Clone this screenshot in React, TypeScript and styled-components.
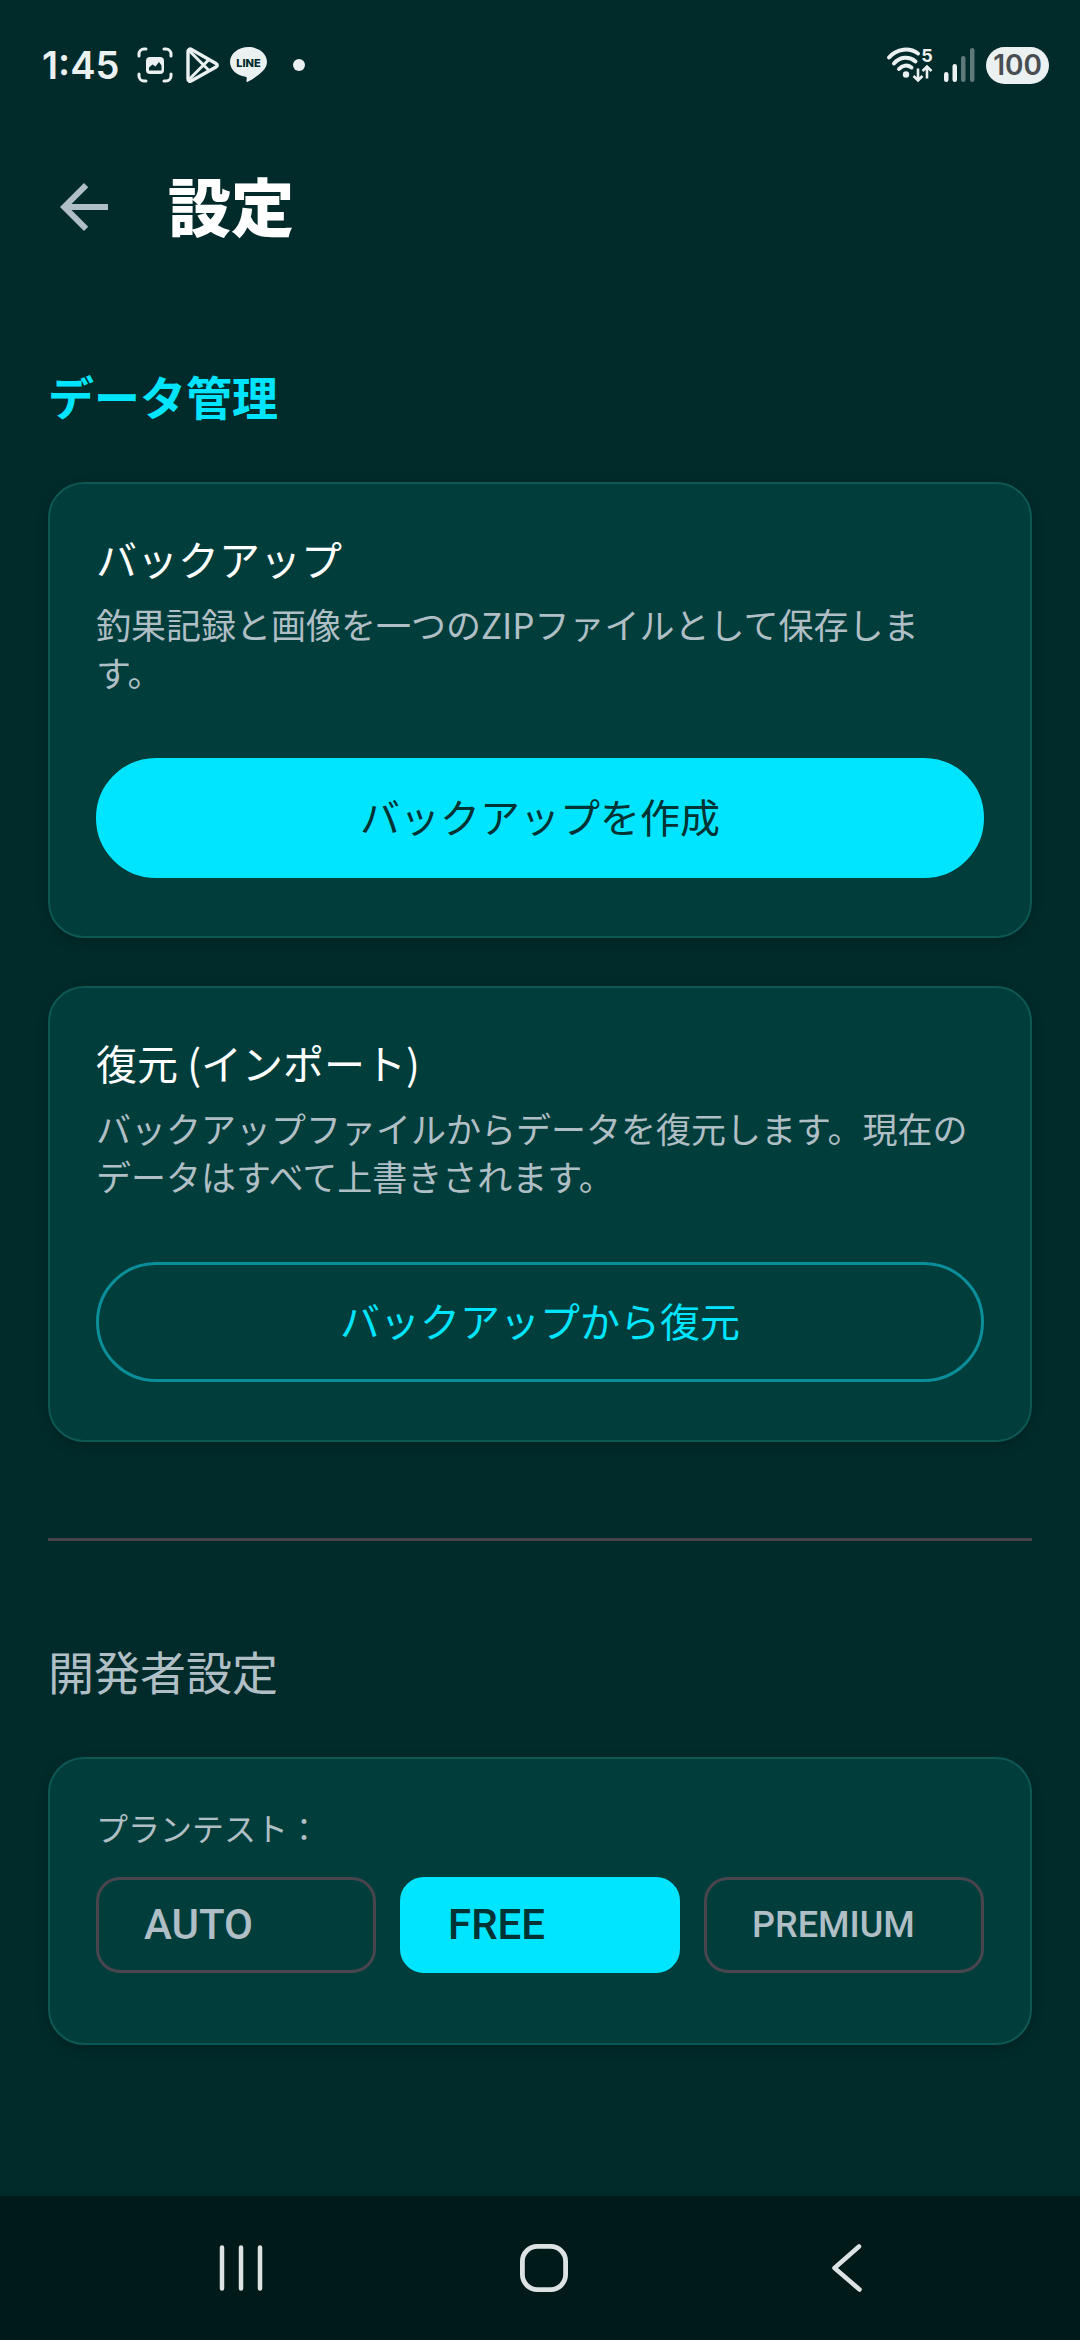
import React, { useState } from "react";
import styled, { createGlobalStyle } from "styled-components";

const color = {
  page: "#002b2a",
  card: "#003d3b",
  cardEdge: "#0e5854",
  nav: "#001a19",
  accent: "#00e5ff",
  onAccent: "#003333",
  muted: "#b0bec5",
  outline: "#49454f",
  status: "#ebf0f1",
};

const GlobalStyle = createGlobalStyle`
  *, *::before, *::after { box-sizing: border-box; }
  body {
    margin: 0;
    background: ${color.page};
    font-family: "Noto Sans CJK JP", sans-serif;
  }
  button { font: inherit; cursor: pointer; }
  svg { display: block; }
`;

const Screen = styled.div`
  display: flex;
  flex-direction: column;
  min-height: 100vh;
  color: #fff;
`;

const StatusBar = styled.div`
  display: flex;
  align-items: center;
  justify-content: space-between;
  height: 130px;
  padding: 0 31px 0 42px;
  color: ${color.status};
  font-family: Inter, sans-serif;
`;

const StatusGroup = styled.div<{ $gap: number }>`
  display: flex;
  align-items: center;
  gap: ${(p) => p.$gap}px;
`;

const Clock = styled.time`
  margin-right: 8px;
  font-size: 38px;
  font-weight: 600;
  line-height: 48px;
`;

const MoreDot = styled.span`
  width: 12px;
  height: 12px;
  margin-left: 16px;
  border-radius: 50%;
  background: ${color.status};
`;

const Battery = styled.span`
  height: 37px;
  padding: 0 7px;
  border-radius: 19px;
  background: ${color.status};
  color: #484d52;
  font-size: 28px;
  font-weight: 600;
  line-height: 37px;
`;

const Header = styled.header`
  display: flex;
  align-items: center;
  gap: 48px;
  height: 154px;
  padding: 0 48px;
`;

const BackButton = styled.button`
  padding: 0;
  border: 0;
  background: none;
  color: ${color.muted};
`;

const PageTitle = styled.h1`
  margin: 0;
  padding-bottom: 6px;
  font-size: 63px;
  font-weight: 900;
  line-height: 84px;
`;

const Main = styled.main`
  flex: 1;
  padding: 78px 48px;
`;

const SectionTitle = styled.h2<{ $accent?: boolean }>`
  margin: 0 0 54px;
  color: ${(p) => (p.$accent ? color.accent : color.muted)};
  font-size: 46px;
  font-weight: ${(p) => (p.$accent ? 700 : 400)};
  line-height: 66px;
`;

const CardList = styled.div`
  display: flex;
  flex-direction: column;
  gap: 48px;
`;

const Card = styled.section`
  padding: 46px 46px 58px;
  border: 2px solid ${color.cardEdge};
  border-radius: 36px;
  background: ${color.card};
  box-shadow: 0 4px 12px rgba(0, 0, 0, 0.22);
`;

const CardTitle = styled.h3`
  margin: 0 0 14px;
  font-size: 41px;
  font-weight: 400;
  line-height: 56px;
`;

const CardText = styled.p`
  margin: 0 0 62px;
  color: ${color.muted};
  font-size: 35px;
  line-height: 48px;
`;

const ActionButton = styled.button<{ $outlined?: boolean }>`
  display: block;
  width: 100%;
  height: 120px;
  padding: 0 48px 4px;
  border: 3px solid ${(p) => (p.$outlined ? "#0a8f9a" : color.accent)};
  border-radius: 60px;
  background: ${(p) => (p.$outlined ? "transparent" : color.accent)};
  color: ${(p) => (p.$outlined ? color.accent : color.onAccent)};
  font-size: 40px;
  line-height: 60px;
`;

const Divider = styled.hr`
  height: 3px;
  margin: 96px 0;
  border: 0;
  background: ${color.outline};
`;

const PlanLabel = styled.p`
  margin: 0 0 28px;
  color: ${color.muted};
  font-size: 32px;
  line-height: 44px;
`;

const PlanRow = styled.div`
  display: grid;
  grid-template-columns: repeat(3, 1fr);
  gap: 24px;
  margin-bottom: 12px;
`;

const PlanButton = styled.button<{ $selected: boolean; $small?: boolean }>`
  height: 96px;
  padding: 0 45px;
  border: 3px solid ${(p) => (p.$selected ? color.accent : color.outline)};
  border-radius: 24px;
  background: ${(p) => (p.$selected ? color.accent : "transparent")};
  color: ${(p) => (p.$selected ? color.onAccent : color.muted)};
  font-family: Roboto, sans-serif;
  font-size: ${(p) => (p.$small ? 36 : 42)}px;
  font-weight: 500;
  line-height: 60px;
  text-align: left;
`;

const NavBar = styled.nav`
  display: grid;
  grid-template-columns: repeat(3, 1fr);
  height: 144px;
  padding: 0 82px 0 90px;
  background: ${color.nav};
`;

const NavButton = styled.button`
  display: flex;
  align-items: center;
  justify-content: center;
  padding: 0;
  border: 0;
  background: none;
  color: #dde2e2;
`;

const CaptureIcon = () => (
  <svg width="36" height="36" viewBox="0 0 36 36" fill="none" aria-hidden="true">
    <path
      d="M2 9V7a5 5 0 0 1 5-5h2M27 2h2a5 5 0 0 1 5 5v2M34 27v2a5 5 0 0 1-5 5h-2M9 34H7a5 5 0 0 1-5-5v-2"
      stroke="currentColor"
      strokeWidth="3"
      strokeLinecap="round"
    />
    <rect x="9" y="10" width="18" height="17" rx="4" fill="currentColor" />
    <path d="M12 23.500v-3l3.500-3 3 2 3.500-4.500 2.500 3.500v5z" fill={color.page} />
  </svg>
);

const PlayIcon = () => (
  <svg
    width="37"
    height="36"
    viewBox="-2 0 37 36"
    fill="none"
    stroke="currentColor"
    strokeWidth="3.400"
    strokeLinejoin="round"
    aria-hidden="true"
  >
    <path d="M3 4.500c0-2 1.800-3 3.500-2l24.500 14c1.700 1 1.700 2.500 0 3.500l-24.500 13.800c-1.700 1-3.500 0-3.500-2z" />
    <path d="M4 3.500 24.500 24M4 32.500 24.500 12" strokeWidth="3" />
  </svg>
);

const LineIcon = () => (
  <svg width="37" height="36" viewBox="0 0 37 36" aria-hidden="true">
    <path
      d="M18.500 0C8.300 0 0 6.700 0 15c0 7.400 6.600 13.600 15.500 14.800 1.200.3 1.400 1 1.200 2.200l-.3 2c-.1.900.6 1.200 1.400.8C22 32.800 29.500 27.800 33 23.800c2.600-2.800 4-5.600 4-8.800C37 6.700 28.700 0 18.500 0z"
      fill="currentColor"
    />
    <text
      x="18.500"
      y="19.500"
      textAnchor="middle"
      fontFamily="Inter, sans-serif"
      fontSize="11"
      fontWeight="800"
      fill={color.page}
    >
      LINE
    </text>
  </svg>
);

const WifiIcon = () => (
  <svg width="48" height="48" viewBox="0 -6 48 48" fill="none" stroke="currentColor" aria-hidden="true">
    <g strokeWidth="4" strokeLinecap="round">
      <path d="M4 10.500C12 1 25 .5 33 6.500" />
      <path d="M9 16.500C15 9.500 24 9 30.500 14.500" />
      <path d="M14 22c3.500-4 8.500-4.500 12.500-1.500" />
    </g>
    <circle cx="21" cy="27.500" r="3.200" fill="currentColor" stroke="none" />
    <path d="M33 21.500V33M28.500 29l4.500 4.500 4.500-4.500M42 31.500V20M37.500 24l4.500-4.500 4.500 4.500" strokeWidth="2.600" />
    <text
      x="42"
      y="14.500"
      textAnchor="middle"
      fontFamily="Inter, sans-serif"
      fontSize="18"
      fontWeight="700"
      fill="currentColor"
      stroke="none"
    >
      5
    </text>
  </svg>
);

const SignalIcon = () => (
  <svg width="31" height="34" viewBox="0 0 31 34" fill="currentColor" aria-hidden="true">
    <rect x="0" y="24" width="4.500" height="10" rx="2.200" />
    <rect x="8.500" y="16" width="4.500" height="18" rx="2.200" />
    <rect x="17" y="8" width="4.500" height="26" rx="2.200" opacity="0.400" />
    <rect x="26" y="0" width="4.500" height="34" rx="2.200" opacity="0.400" />
  </svg>
);

const ArrowBackIcon = () => (
  <svg width="72" height="72" viewBox="0 0 24 24" fill="currentColor" aria-hidden="true">
    <path d="M20 11H7.830l5.590-5.590L12 4l-8 8 8 8 1.410-1.410L7.830 13H20v-2z" />
  </svg>
);

const RecentsIcon = () => (
  <svg width="48" height="48" viewBox="0 0 48 48" stroke="currentColor" strokeWidth="4.500" strokeLinecap="round" aria-hidden="true">
    <path d="M5 3.500v41M24 3.500v41M43 3.500v41" />
  </svg>
);

const HomeIcon = () => (
  <svg width="48" height="48" viewBox="0 0 48 48" fill="none" stroke="currentColor" strokeWidth="4.800" aria-hidden="true">
    <rect x="2.400" y="2.400" width="43.200" height="43.200" rx="15" />
  </svg>
);

const NavBackIcon = () => (
  <svg
    width="32"
    height="48"
    viewBox="0 0 32 48"
    fill="none"
    stroke="currentColor"
    strokeWidth="4.500"
    strokeLinecap="round"
    strokeLinejoin="round"
    aria-hidden="true"
  >
    <path d="M28 2.500 3.500 24 28.500 45.500" />
  </svg>
);

const transfers = [
  {
    title: "バックアップ",
    text: "釣果記録と画像を一つのZIPファイルとして保存します。",
    action: "バックアップを作成",
    outlined: false,
  },
  {
    title: "復元 (インポート)",
    text: "バックアップファイルからデータを復元します。現在のデータはすべて上書きされます。",
    action: "バックアップから復元",
    outlined: true,
  },
];

const plans = [
  { name: "AUTO", small: false },
  { name: "FREE", small: false },
  { name: "PREMIUM", small: true },
];

export default function App() {
  const [plan, setPlan] = useState("FREE");

  return (
    <Screen lang="ja">
      <GlobalStyle />
      <StatusBar>
        <StatusGroup $gap={10}>
          <Clock>1:45</Clock>
          <CaptureIcon />
          <PlayIcon />
          <LineIcon />
          <MoreDot />
        </StatusGroup>
        <StatusGroup $gap={11}>
          <WifiIcon />
          <SignalIcon />
          <Battery>100</Battery>
        </StatusGroup>
      </StatusBar>

      <Header>
        <BackButton type="button" aria-label="戻る">
          <ArrowBackIcon />
        </BackButton>
        <PageTitle>設定</PageTitle>
      </Header>

      <Main>
        <SectionTitle $accent>データ管理</SectionTitle>
        <CardList>
          {transfers.map((item) => (
            <Card key={item.title}>
              <CardTitle>{item.title}</CardTitle>
              <CardText>{item.text}</CardText>
              <ActionButton type="button" $outlined={item.outlined}>
                {item.action}
              </ActionButton>
            </Card>
          ))}
        </CardList>

        <Divider />

        <SectionTitle>開発者設定</SectionTitle>
        <Card>
          <PlanLabel id="plan-label">プランテスト：</PlanLabel>
          <PlanRow role="group" aria-labelledby="plan-label">
            {plans.map(({ name, small }) => (
              <PlanButton
                key={name}
                type="button"
                aria-pressed={plan === name}
                $selected={plan === name}
                $small={small}
                onClick={() => setPlan(name)}
              >
                {name}
              </PlanButton>
            ))}
          </PlanRow>
        </Card>
      </Main>

      <NavBar>
        <NavButton type="button" aria-label="履歴">
          <RecentsIcon />
        </NavButton>
        <NavButton type="button" aria-label="ホーム">
          <HomeIcon />
        </NavButton>
        <NavButton type="button" aria-label="前の画面">
          <NavBackIcon />
        </NavButton>
      </NavBar>
    </Screen>
  );
}
